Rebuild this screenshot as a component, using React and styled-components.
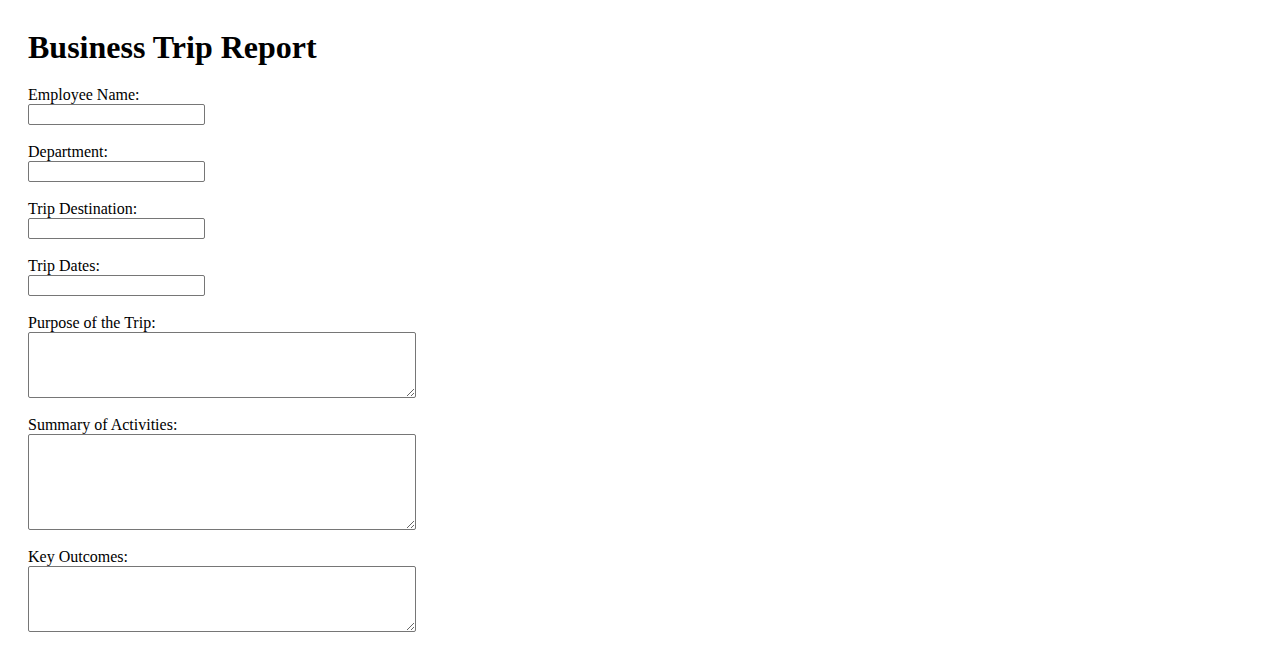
import React from 'react';
import styled, { createGlobalStyle } from 'styled-components';

const GlobalStyle = createGlobalStyle`
  body {
    margin: 8px;
    background: #fff;
    color: #000;
    font-family: "Liberation Serif", "Times New Roman", serif;
    font-size: 16px;
  }
`;

const Page = styled.div`
  padding: 21px 20px 20px;
`;

const Title = styled.h1`
  margin: 0 0 20px 0;
  font-size: 32px;
  font-weight: bold;
  line-height: 37px;
`;

const Form = styled.form`
  display: flex;
  flex-direction: column;
  align-items: flex-start;
`;

const Field = styled.div`
  display: flex;
  flex-direction: column;
  align-items: flex-start;
  margin-bottom: 17.6px;
`;

const Label = styled.label`
  display: block;
  line-height: 18.4px;
`;

const Input = styled.input`
  box-sizing: border-box;
  width: 177px;
  height: 21px;
  margin: 0;
  padding: 1px 2px;
  border: 1px solid #767676;
  border-radius: 2px;
  font-family: "Liberation Sans", Arial, sans-serif;
  font-size: 13.33px;
  background: #fff;
`;

const TextArea = styled.textarea`
  box-sizing: border-box;
  width: 388px;
  height: ${(props) => props.height || '66px'};
  margin: 0;
  padding: 2px;
  border: 1px solid #767676;
  border-radius: 2px;
  font-family: "Liberation Mono", monospace;
  font-size: 13.33px;
  background: #fff;
`;

const inputs = [
  { id: 'name', label: 'Employee Name:' },
  { id: 'department', label: 'Department:' },
  { id: 'destination', label: 'Trip Destination:' },
  { id: 'dates', label: 'Trip Dates:' },
];

const areas = [
  { id: 'purpose', label: 'Purpose of the Trip:', height: '66px' },
  { id: 'summary', label: 'Summary of Activities:', height: '96px' },
  { id: 'outcomes', label: 'Key Outcomes:', height: '66px' },
];

const App = () => {
  return (
    <>
      <GlobalStyle />
      <Page>
        <Title>Business Trip Report</Title>
        <Form onSubmit={(e) => e.preventDefault()}>
          {inputs.map((f) => (
            <Field key={f.id}>
              <Label htmlFor={f.id}>{f.label}</Label>
              <Input id={f.id} name={f.id} type="text" />
            </Field>
          ))}
          {areas.map((f) => (
            <Field key={f.id}>
              <Label htmlFor={f.id}>{f.label}</Label>
              <TextArea id={f.id} name={f.id} height={f.height} />
            </Field>
          ))}
        </Form>
      </Page>
    </>
  );
};

export default App;
